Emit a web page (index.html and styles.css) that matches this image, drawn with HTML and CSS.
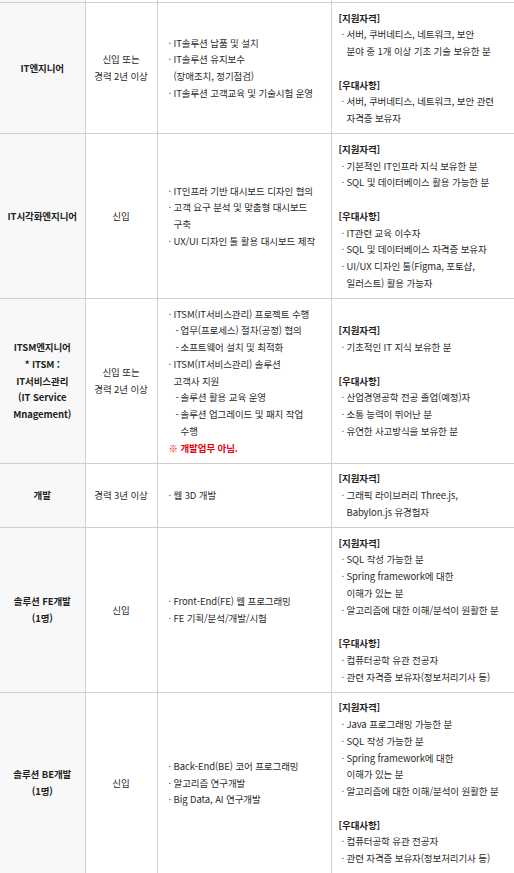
FILE: index.html
```html
<!DOCTYPE html>
<html lang="ko">
<head>
<meta charset="utf-8">
<title>모집부문</title>
<link rel="stylesheet" href="styles.css">
</head>
<body>
<table class="jobs">
  <colgroup>
    <col class="c1"><col class="c2"><col class="c3"><col class="c4">
  </colgroup>
  <tr class="cut"><td class="role"></td><td></td><td></td><td></td></tr>
  <tr>
    <td class="role">IT엔지니어</td>
    <td class="career">신입 또는<br>경력 2년 이상</td>
    <td class="duty">
      <div class="li"><span class="b">·</span><span>IT솔루션 납품 및 설치</span></div>
      <div class="li"><span class="b">·</span><span>IT솔루션 유지보수<br>(장애조치, 정기점검)</span></div>
      <div class="li"><span class="b">·</span><span>IT솔루션 고객교육 및 기술시험 운영</span></div>
    </td>
    <td class="req">
      <div class="h">[지원자격]</div>
      <div class="li"><span class="b">·</span><span>서버, 쿠버네티스, 네트워크, 보안<br>분야 중 1개 이상 기초 기술 보유한 분</span></div>
      <div class="h sec">[우대사항]</div>
      <div class="li"><span class="b">·</span><span>서버, 쿠버네티스, 네트워크, 보안 관련<br>자격증 보유자</span></div>
    </td>
  </tr>
  <tr>
    <td class="role">IT시각화엔지니어</td>
    <td class="career">신입</td>
    <td class="duty">
      <div class="li"><span class="b">·</span><span>IT인프라 기반 대시보드 디자인 협의</span></div>
      <div class="li"><span class="b">·</span><span>고객 요구 분석 및 맞춤형 대시보드<br>구축</span></div>
      <div class="li"><span class="b">·</span><span>UX/UI 디자인 툴 활용 대시보드 제작</span></div>
    </td>
    <td class="req">
      <div class="h">[지원자격]</div>
      <div class="li"><span class="b">·</span><span>기본적인 IT인프라 지식 보유한 분</span></div>
      <div class="li"><span class="b">·</span><span>SQL 및 데이터베이스 활용 가능한 분</span></div>
      <div class="h sec">[우대사항]</div>
      <div class="li"><span class="b">·</span><span>IT관련 교육 이수자</span></div>
      <div class="li"><span class="b">·</span><span>SQL 및 데이터베이스 자격증 보유자</span></div>
      <div class="li"><span class="b">·</span><span>UI/UX 디자인 툴(Figma, 포토샵,<br>일러스트) 활용 가능자</span></div>
    </td>
  </tr>
  <tr>
    <td class="role">ITSM엔지니어<br>* ITSM :<br>IT서비스관리<br>(IT Service<br>Mnagement)</td>
    <td class="career">신입 또는<br>경력 2년 이상</td>
    <td class="duty">
      <div class="li"><span class="b">·</span><span>ITSM(IT서비스관리) 프로젝트 수행</span></div>
      <div class="li sub"><span class="b">-</span><span>업무(프로세스) 절차(공정) 협의</span></div>
      <div class="li sub"><span class="b">-</span><span>소프트웨어 설치 및 최적화</span></div>
      <div class="li"><span class="b">·</span><span>ITSM(IT서비스관리) 솔루션<br>고객사 지원</span></div>
      <div class="li sub"><span class="b">-</span><span>솔루션 활용 교육 운영</span></div>
      <div class="li sub"><span class="b">-</span><span>솔루션 업그레이드 및 패치 작업<br>수행</span></div>
      <div class="warn">※ 개발업무 아님.</div>
    </td>
    <td class="req">
      <div class="h">[지원자격]</div>
      <div class="li"><span class="b">·</span><span>기초적인 IT 지식 보유한 분</span></div>
      <div class="h sec">[우대사항]</div>
      <div class="li"><span class="b">·</span><span>산업경영공학 전공 졸업(예정)자</span></div>
      <div class="li"><span class="b">·</span><span>소통 능력이 뛰어난 분</span></div>
      <div class="li"><span class="b">·</span><span>유연한 사고방식을 보유한 분</span></div>
    </td>
  </tr>
  <tr>
    <td class="role">개발</td>
    <td class="career">경력 3년 이상</td>
    <td class="duty">
      <div class="li"><span class="b">·</span><span>웹 3D 개발</span></div>
    </td>
    <td class="req">
      <div class="h">[지원자격]</div>
      <div class="li"><span class="b">·</span><span>그래픽 라이브러리 Three.js,<br>Babylon.js 유경험자</span></div>
    </td>
  </tr>
  <tr>
    <td class="role">솔루션 FE개발<br>(1명)</td>
    <td class="career">신입</td>
    <td class="duty">
      <div class="li"><span class="b">·</span><span>Front-End(FE) 웹 프로그래밍</span></div>
      <div class="li"><span class="b">·</span><span>FE 기획/분석/개발/시험</span></div>
    </td>
    <td class="req">
      <div class="h">[지원자격]</div>
      <div class="li"><span class="b">·</span><span>SQL 작성 가능한 분</span></div>
      <div class="li"><span class="b">·</span><span>Spring framework에 대한<br>이해가 있는 분</span></div>
      <div class="li"><span class="b">·</span><span>알고리즘에 대한 이해/분석이 원활한 분</span></div>
      <div class="h sec">[우대사항]</div>
      <div class="li"><span class="b">·</span><span>컴퓨터공학 유관 전공자</span></div>
      <div class="li"><span class="b">·</span><span>관련 자격증 보유자(정보처리기사 등)</span></div>
    </td>
  </tr>
  <tr>
    <td class="role">솔루션 BE개발<br>(1명)</td>
    <td class="career">신입</td>
    <td class="duty">
      <div class="li"><span class="b">·</span><span>Back-End(BE) 코어 프로그래밍</span></div>
      <div class="li"><span class="b">·</span><span>알고리즘 연구개발</span></div>
      <div class="li"><span class="b">·</span><span>Big Data, AI 연구개발</span></div>
    </td>
    <td class="req">
      <div class="h">[지원자격]</div>
      <div class="li"><span class="b">·</span><span>Java 프로그래밍 가능한 분</span></div>
      <div class="li"><span class="b">·</span><span>SQL 작성 가능한 분</span></div>
      <div class="li"><span class="b">·</span><span>Spring framework에 대한<br>이해가 있는 분</span></div>
      <div class="li"><span class="b">·</span><span>알고리즘에 대한 이해/분석이 원활한 분</span></div>
      <div class="h sec">[우대사항]</div>
      <div class="li"><span class="b">·</span><span>컴퓨터공학 유관 전공자</span></div>
      <div class="li"><span class="b">·</span><span>관련 자격증 보유자(정보처리기사 등)</span></div>
    </td>
  </tr>
</table>
</body>
</html>
```

FILE: styles.css
```css
html, body {
  margin: 0;
  padding: 0;
  background: #fff;
  overflow: hidden;
}
body {
  font-family: "Noto Sans CJK KR", "Noto Sans", sans-serif;
  font-size: 9.5px;
  line-height: 16.75px;
  color: #2a2a2a;
  letter-spacing: -0.1px;
}
.jobs {
  border-collapse: collapse;
  table-layout: fixed;
  width: 514px;
}
.c1 { width: 85px; }
.c2 { width: 72px; }
.c3 { width: 174px; }
.c4 { width: 183px; }
.jobs td {
  border: 1px solid #cfcfcf;
  padding: 6.5px 7px;
  vertical-align: middle;
  white-space: nowrap;
}
.jobs td:first-child { border-left: none; }
.jobs td:last-child { border-right: none; }
.jobs tr.cut td {
  height: 2px;
  padding: 0;
  border-top: none;
  line-height: 0;
  font-size: 0;
}
.role {
  background: #f8f8f8;
  font-weight: 700;
  color: #1e1e1e;
  text-align: center;
}
.career {
  text-align: center;
}
.jobs td.duty {
  padding-left: 11px;
}
.jobs td.req {
  padding-left: 7px;
}
.li {
  display: flex;
}
.li .b {
  flex: none;
  width: 5px;
}
.li.sub {
  padding-left: 7px;
}
.req .li {
  padding-left: 3px;
}
.h {
  font-weight: 700;
  color: #1e1e1e;
}
.h.sec {
  margin-top: 16.75px;
}
.warn {
  color: #e8000f;
  font-weight: 700;
}
```
